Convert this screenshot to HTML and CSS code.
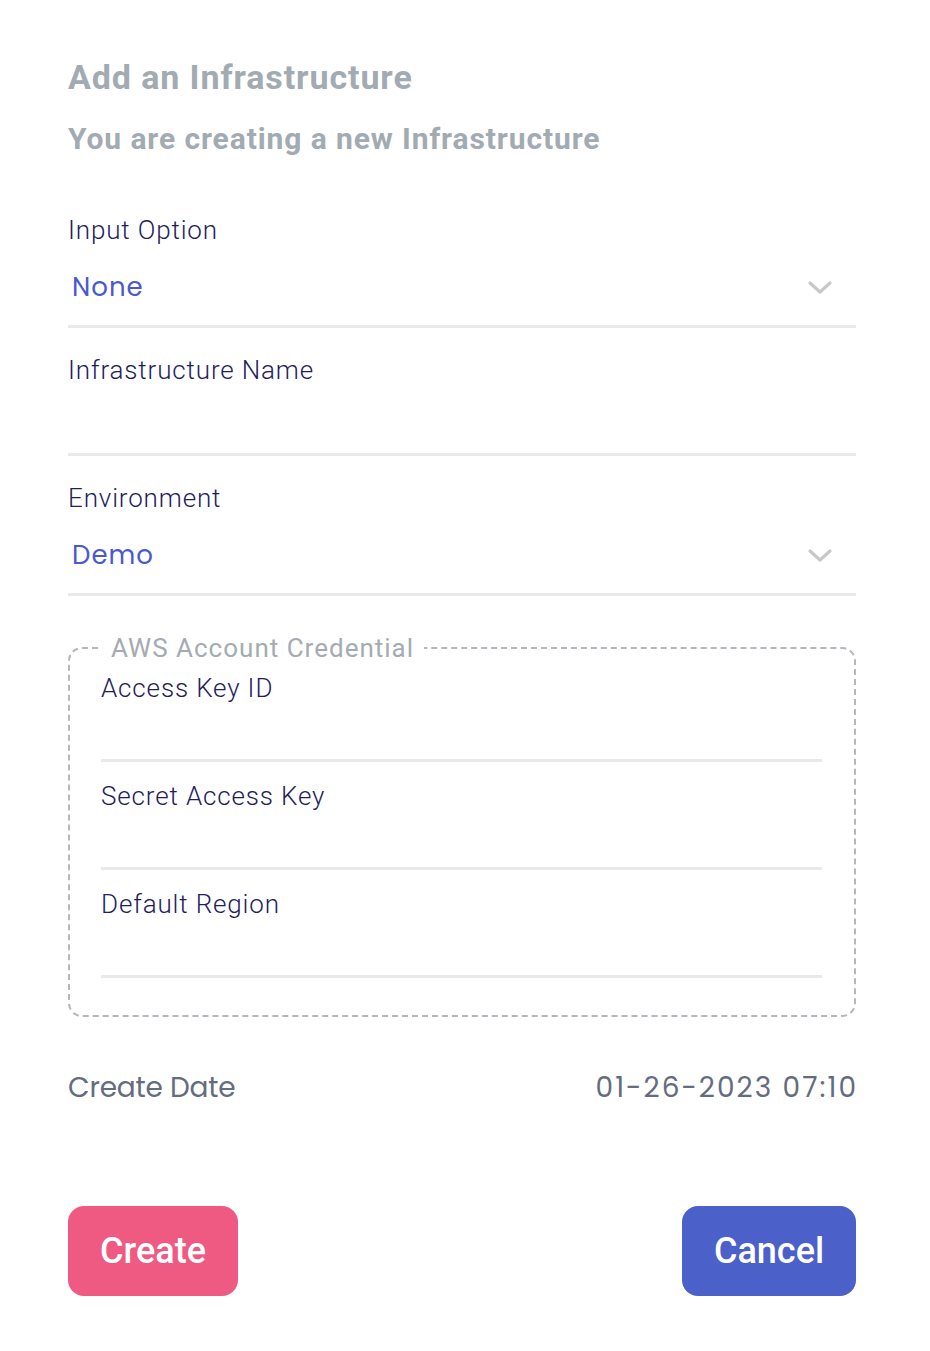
FILE: index.html
```html
<!DOCTYPE html>
<html lang="en">
<head>
<meta charset="utf-8">
<title>Add an Infrastructure</title>
<link rel="stylesheet" href="styles.css">
</head>
<body>
<main class="panel">
  <header class="head">
    <h1 class="title">Add an Infrastructure</h1>
    <p class="subtitle">You are creating a new Infrastructure</p>
  </header>

  <form class="form">
    <div class="field">
      <label class="label">Input Option</label>
      <div class="select">
        <span class="value">None</span>
        <svg class="chev" width="26" height="16" viewBox="0 0 26 16"><path d="M3 3 L13 12 L23 3" fill="none" stroke="#c8c8c8" stroke-width="3.2" stroke-linecap="round" stroke-linejoin="round"/></svg>
      </div>
    </div>

    <div class="field">
      <label class="label">Infrastructure Name</label>
      <div class="input"></div>
    </div>

    <div class="field">
      <label class="label">Environment</label>
      <div class="select">
        <span class="value">Demo</span>
        <svg class="chev" width="26" height="16" viewBox="0 0 26 16"><path d="M3 3 L13 12 L23 3" fill="none" stroke="#c8c8c8" stroke-width="3.2" stroke-linecap="round" stroke-linejoin="round"/></svg>
      </div>
    </div>

    <fieldset class="group">
      <legend class="legend">AWS Account Credential</legend>
      <div class="subfield">
        <label class="label">Access Key ID</label>
        <div class="subinput"></div>
      </div>
      <div class="subfield">
        <label class="label">Secret Access Key</label>
        <div class="subinput"></div>
      </div>
      <div class="subfield">
        <label class="label">Default Region</label>
        <div class="subinput"></div>
      </div>
    </fieldset>

    <div class="daterow">
      <span class="date-label">Create Date</span>
      <span class="date-value">01-26-2023 07:10</span>
    </div>

    <div class="actions">
      <button type="button" class="btn btn-create">Create</button>
      <button type="button" class="btn btn-cancel">Cancel</button>
    </div>
  </form>
</main>
</body>
</html>
```

FILE: styles.css
```css
* { box-sizing: border-box; }
html, body { margin: 0; padding: 0; background: #ffffff; }
body { font-family: Roboto, "Liberation Sans", sans-serif; }

.panel {
  width: 930px;
  padding: 57px 74px 0 68px;
}

.head { display: flex; flex-direction: column; gap: 24px; }
.title {
  margin: 0;
  font-size: 34px;
  line-height: 40px;
  font-weight: 700;
  letter-spacing: 0.9px;
  color: #a2aab2;
}
.subtitle {
  margin: 0;
  font-size: 30px;
  line-height: 36px;
  font-weight: 700;
  letter-spacing: 0.9px;
  color: #a2aab2;
}

.form { display: flex; flex-direction: column; margin-top: 31px; }

.field {
  padding-top: 27px;
  border-bottom: 3px solid #e9e9e9;
}
.label {
  display: block;
  font-size: 26px;
  line-height: 30px;
  font-weight: 300;
  letter-spacing: 0.85px;
  color: #241d5d;
}
.select {
  display: flex;
  align-items: center;
  justify-content: space-between;
  margin-top: 27px;
  padding: 0 23px 23px 4px;
}
.value {
  font-family: Poppins, Inter, sans-serif;
  font-size: 26px;
  line-height: 30px;
  color: #4a5acd;
  letter-spacing: 1px;
}
.chev { display: block; margin-top: 2px; }
.input { height: 68px; }

.group {
  margin: 37px 0 0 0;
  padding: 10px 32px 37px 31px;
  border: 2px dashed #b3b8be;
  border-radius: 14px;
  min-width: 0;
}
.legend {
  padding: 0 10px;
  font-size: 26px;
  line-height: 30px;
  font-weight: 400;
  letter-spacing: 1px;
  color: #a4abb2;
}
.subfield {
  border-bottom: 3px solid #e9e9e9;
  padding-bottom: 56px;
}
.subfield + .subfield { padding-top: 19px; }

.daterow {
  display: flex;
  justify-content: space-between;
  margin-top: 54px;
  font-family: Poppins, Inter, sans-serif;
  font-size: 28px;
  line-height: 34px;
  color: #646c80;
}
.date-label { letter-spacing: -0.2px; }
.date-value { letter-spacing: 2px; margin-right: -2px; }

.actions {
  display: flex;
  justify-content: space-between;
  margin-top: 101px;
}
.btn {
  height: 90px;
  border: none;
  border-radius: 16px;
  padding: 0;
  font-family: Roboto, sans-serif;
  font-size: 36px;
  font-weight: 500;
  color: #ffffff;
}
.btn-create { background: #ee5a82; width: 170px; }
.btn-cancel { background: #4b60c8; width: 174px; }
```
